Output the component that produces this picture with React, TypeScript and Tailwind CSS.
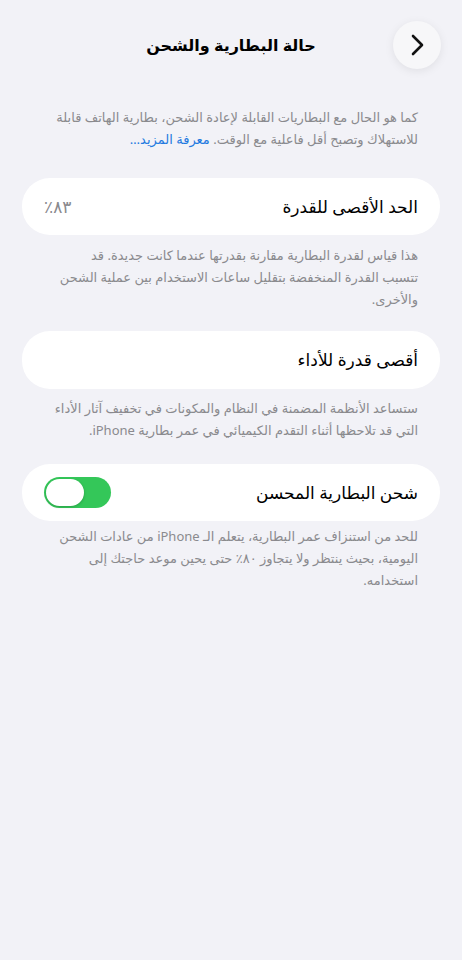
import React, { useState } from "react";

const Toggle = ({ on, onChange }: { on: boolean; onChange: () => void }) => (
  <button
    type="button"
    onClick={onChange}
    className={`flex h-[31px] w-[67px] shrink-0 items-center rounded-full p-[2px] ${
      on ? "justify-end bg-[#34c759]" : "justify-start bg-[#e9e9ea]"
    }`}
  >
    <span className="block h-[27px] w-[38px] rounded-full bg-white shadow-[0_1px_3px_rgba(0,0,0,0.2)]" />
  </button>
);

const Footer = ({ lines, pt }: { lines: React.ReactNode[]; pt: string }) => (
  <p className={`whitespace-nowrap px-[22px] text-[13px] leading-[22px] text-[#8a8a8e] ${pt}`}>
    {lines.map((l, i) => (
      <React.Fragment key={i}>
        {l}
        {i < lines.length - 1 && <br />}
      </React.Fragment>
    ))}
  </p>
);

const App = () => {
  const [optimized, setOptimized] = useState(true);

  return (
    <div
      dir="rtl"
      className="min-h-screen w-full bg-[#f2f2f7] text-black"
      style={{ fontFamily: '"Noto Sans", "DejaVu Sans", sans-serif' }}
    >
      {/* header */}
      <div className="relative flex h-[90px] items-center justify-center">
        <h1 className="text-[16px] font-bold">حالة البطارية والشحن</h1>
        <button
          type="button"
          className="absolute right-[21px] top-[21px] flex h-[48px] w-[48px] items-center justify-center rounded-full bg-[#f7f7f9] shadow-[0_2px_10px_rgba(0,0,0,0.08)]"
        >
          <svg width="14" height="22" viewBox="0 0 14 22" fill="none">
            <path d="M3 2l9 9-9 9" stroke="#111" strokeWidth="2.6" strokeLinecap="round" strokeLinejoin="round" />
          </svg>
        </button>
      </div>

      <div className="px-[22px]">
        <Footer
          pt="pt-[16px]"
          lines={[
            "كما هو الحال مع البطاريات القابلة لإعادة الشحن، بطارية الهاتف قابلة",
            <>
              للاستهلاك وتصبح أقل فاعلية مع الوقت. <span className="text-[#1f7ae0]">معرفة المزيد…</span>
            </>,
          ]}
        />

        {/* max capacity */}
        <div className="mt-[28px] flex h-[57px] items-center justify-between rounded-[28px] bg-white px-[22px]">
          <span className="text-[17px]">الحد الأقصى للقدرة</span>
          <span dir="ltr" className="text-[17px] text-[#8a8a8e]">٪٨٣</span>
        </div>
        <Footer
          pt="pt-[9px]"
          lines={[
            "هذا قياس لقدرة البطارية مقارنة بقدرتها عندما كانت جديدة. قد",
            "تتسبب القدرة المنخفضة بتقليل ساعات الاستخدام بين عملية الشحن",
            "والأخرى.",
          ]}
        />

        {/* peak performance */}
        <div className="mt-[21px] flex h-[58px] items-center rounded-[28px] bg-white px-[22px]">
          <span className="text-[17px]">أقصى قدرة للأداء</span>
        </div>
        <Footer
          pt="pt-[8px]"
          lines={[
            "ستساعد الأنظمة المضمنة في النظام والمكونات في تخفيف آثار الأداء",
            "التي قد تلاحظها أثناء التقدم الكيميائي في عمر بطارية iPhone.",
          ]}
        />

        {/* optimized charging */}
        <div className="mt-[23px] flex h-[57px] items-center justify-between rounded-[28px] bg-white px-[22px]">
          <span className="text-[17px]">شحن البطارية المحسن</span>
          <Toggle on={optimized} onChange={() => setOptimized(!optimized)} />
        </div>
        <Footer
          pt="pt-[4px]"
          lines={[
            "للحد من استنزاف عمر البطارية، يتعلم الـ iPhone من عادات الشحن",
            <>
              اليومية، بحيث ينتظر ولا يتجاوز <span dir="ltr">٪٨٠</span> حتى يحين موعد حاجتك إلى
            </>,
            "استخدامه.",
          ]}
        />
      </div>
    </div>
  );
};

export default App;
